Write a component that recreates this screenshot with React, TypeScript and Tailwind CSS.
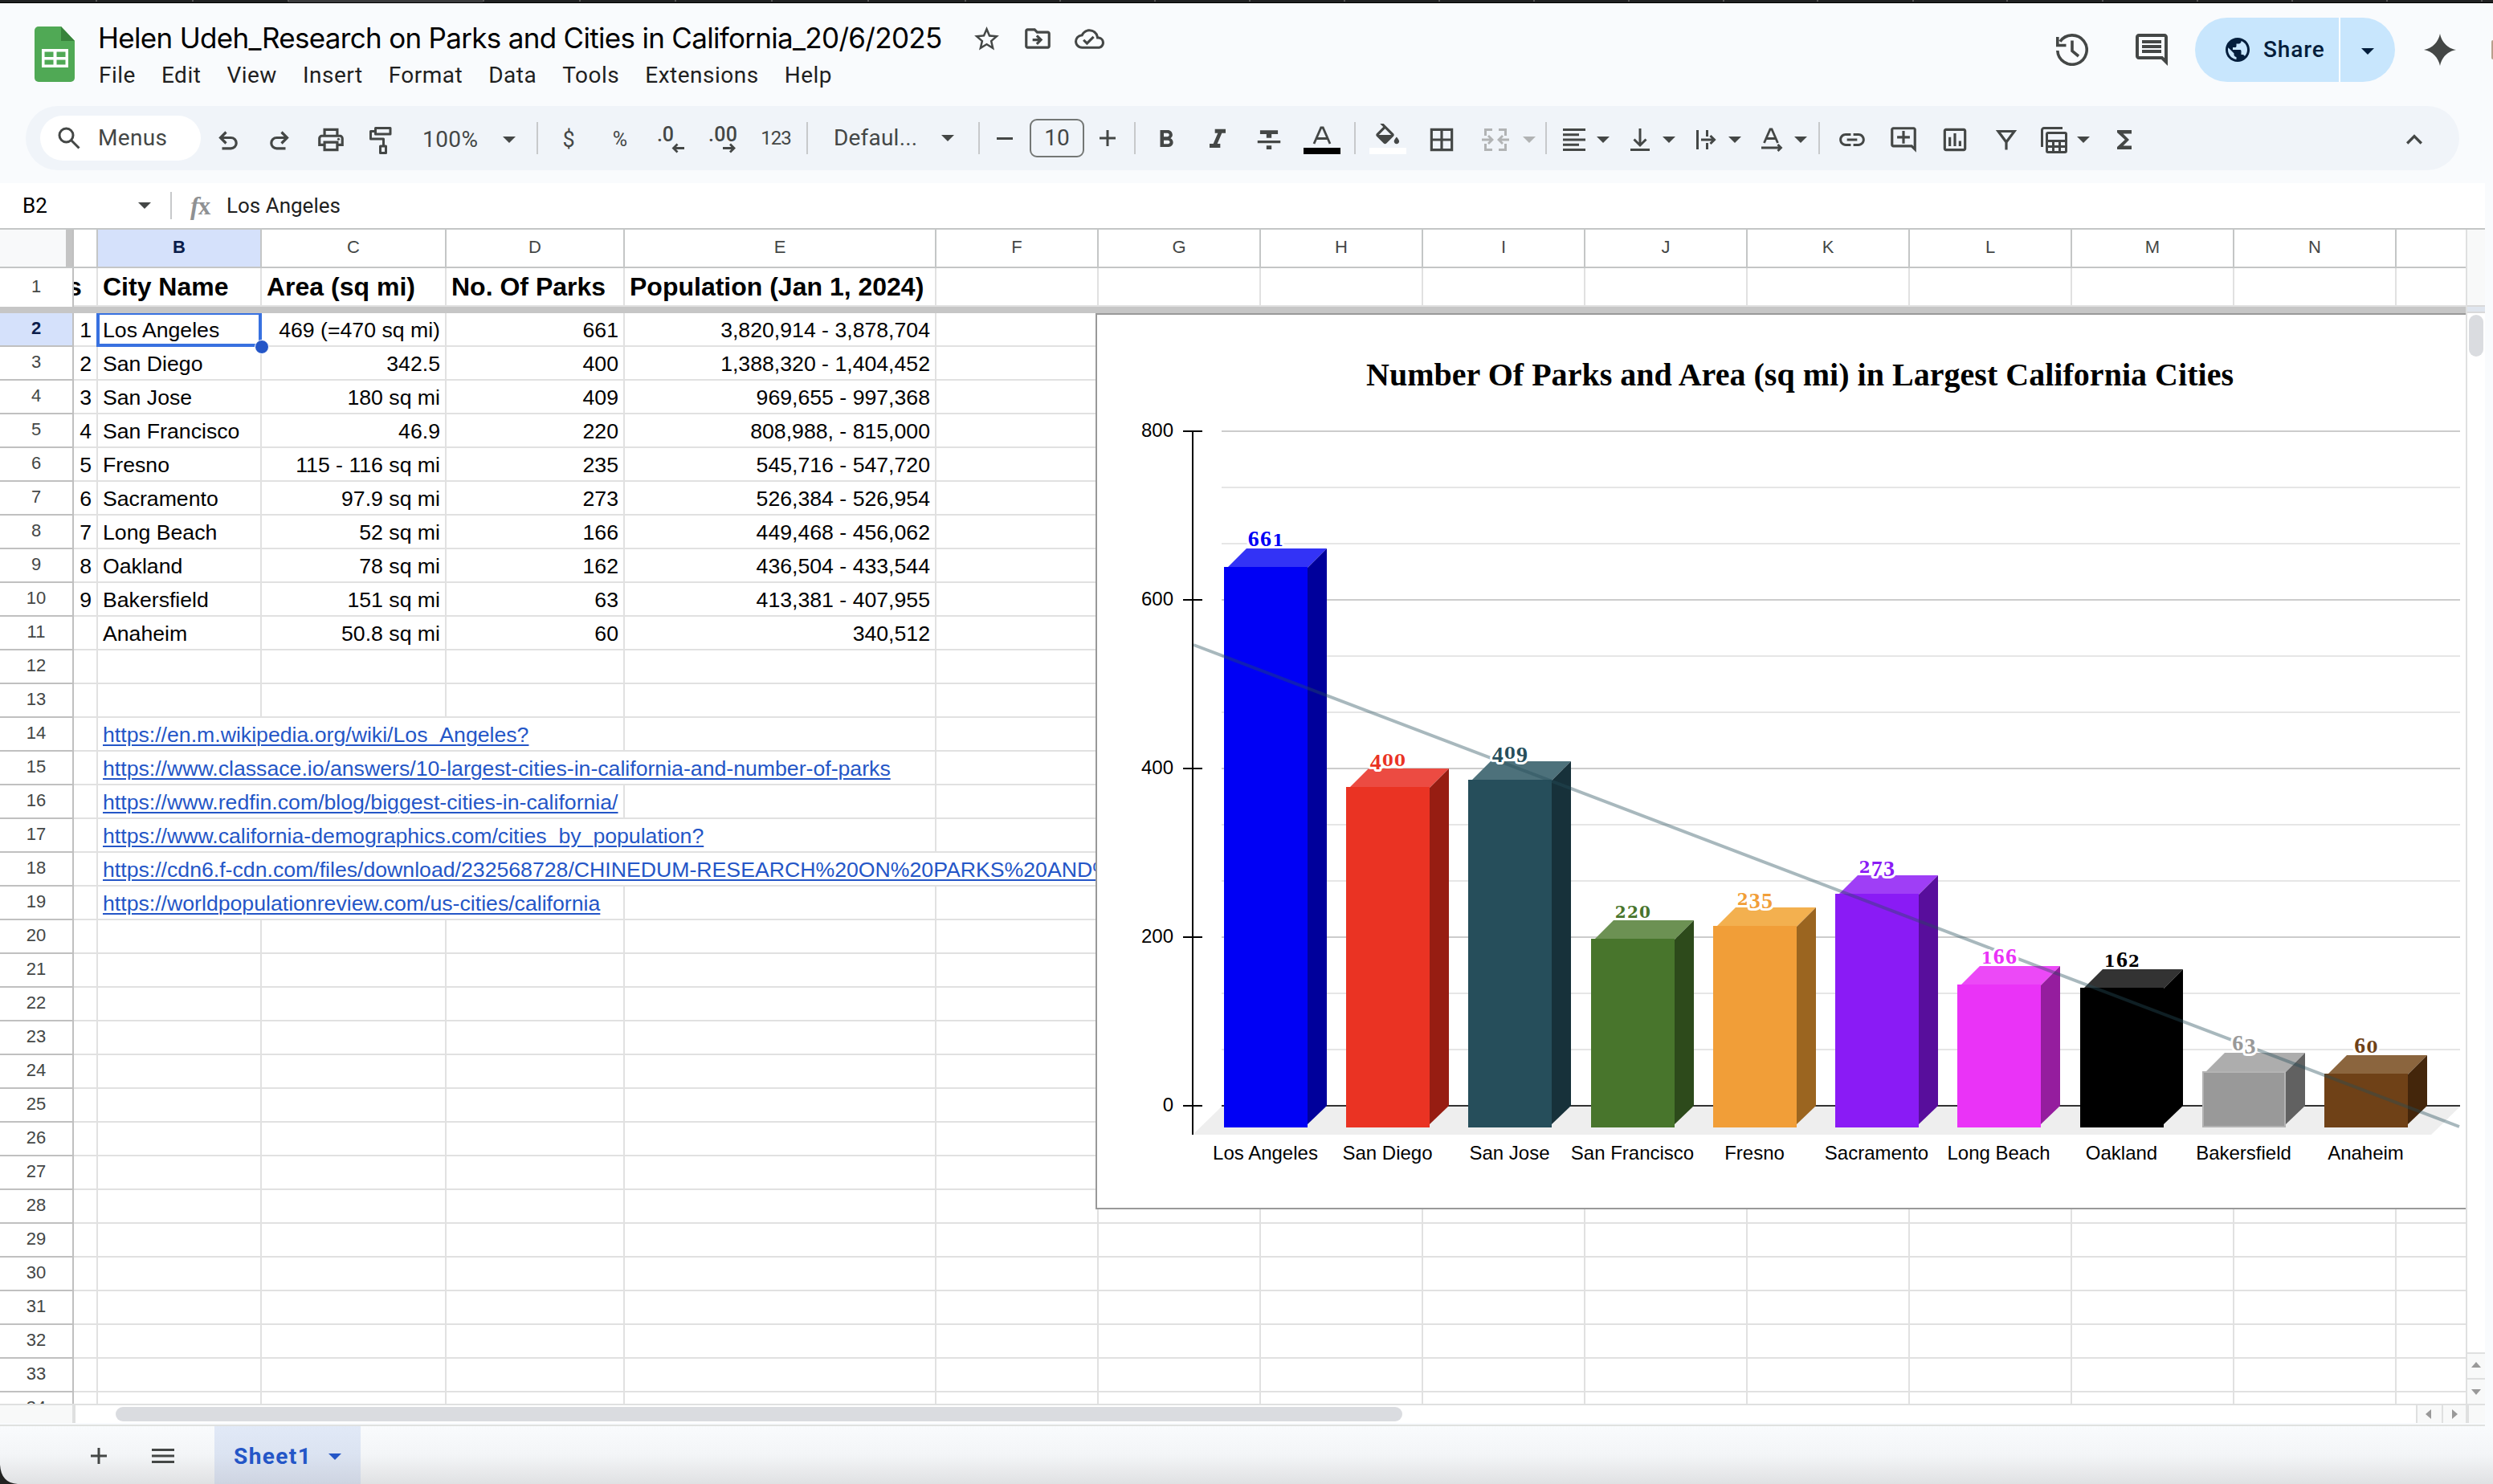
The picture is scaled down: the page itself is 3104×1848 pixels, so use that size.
// src/App.tsx
// Spreadsheet editor: title bar, toolbar, formula bar, frozen grid with an embedded 3D column chart

import type { ReactNode } from 'react';
import {
  MdBorderAll,
  MdFormatBold,
  MdFormatItalic,
  MdFormatStrikethrough,
  MdFunctions,
  MdKeyboardArrowUp,
  MdLink,
  MdOutlineAddComment,
  MdOutlineCloudDone,
  MdOutlineComment,
  MdOutlineDriveFileMove,
  MdOutlineInsertChart,
  MdOutlinePrint,
  MdPublic,
  MdStarOutline,
} from 'react-icons/md';

const MENUS = ['File', 'Edit', 'View', 'Insert', 'Format', 'Data', 'Tools', 'Extensions', 'Help'];

const TAB_MARKS = [119, 239, 358, 601, 721, 840, 960, 1080, 1201, 1319, 1437, 1555, 1673, 1791, 1909, 2027, 2145, 2262, 2381, 2498, 2617, 2735, 2853, 2971, 3089];

const COLUMNS = [
  { name: '', w: 'w-[30px]' },
  { name: 'B', w: 'w-[204px]' },
  { name: 'C', w: 'w-[230px]' },
  { name: 'D', w: 'w-[222px]' },
  { name: 'E', w: 'w-[388px]' },
  { name: 'F', w: 'w-[202px]' },
  { name: 'G', w: 'w-[202px]' },
  { name: 'H', w: 'w-[202px]' },
  { name: 'I', w: 'w-[202px]' },
  { name: 'J', w: 'w-[202px]' },
  { name: 'K', w: 'w-[202px]' },
  { name: 'L', w: 'w-[202px]' },
  { name: 'M', w: 'w-[202px]' },
  { name: 'N', w: 'w-[202px]' },
  { name: '', w: 'w-[86px]' },
];

const HEADINGS = ['', 'City Name', 'Area (sq mi)', 'No. Of Parks', 'Population (Jan 1, 2024)'];

const CITIES = [
  ['1', 'Los Angeles', '469 (=470 sq mi)', '661', '3,820,914 - 3,878,704'],
  ['2', 'San Diego', '342.5', '400', '1,388,320 - 1,404,452'],
  ['3', 'San Jose', '180 sq mi', '409', '969,655 - 997,368'],
  ['4', 'San Francisco', '46.9', '220', '808,988, - 815,000'],
  ['5', 'Fresno', '115 - 116 sq mi', '235', '545,716 - 547,720'],
  ['6', 'Sacramento', '97.9 sq mi', '273', '526,384 - 526,954'],
  ['7', 'Long Beach', '52 sq mi', '166', '449,468 - 456,062'],
  ['8', 'Oakland', '78 sq mi', '162', '436,504 - 433,544'],
  ['9', 'Bakersfield', '151 sq mi', '63', '413,381 - 407,955'],
  ['', 'Anaheim', '50.8 sq mi', '60', '340,512'],
];

// Links spill over the empty cells to their right, `last` is the index of the last column covered
const LINKS: Record<number, { url: string; last: number; w: string }> = {
  14: { url: 'https://en.m.wikipedia.org/wiki/Los_Angeles?', last: 3, w: 'w-[656px]' },
  15: { url: 'https://www.classace.io/answers/10-largest-cities-in-california-and-number-of-parks', last: 4, w: 'w-[1044px]' },
  16: { url: 'https://www.redfin.com/blog/biggest-cities-in-california/', last: 3, w: 'w-[656px]' },
  17: { url: 'https://www.california-demographics.com/cities_by_population?', last: 4, w: 'w-[1044px]' },
  18: { url: 'https://cdn6.f-cdn.com/files/download/232568728/CHINEDUM-RESEARCH%20ON%20PARKS%20AND%', last: 5, w: 'w-[1246px]' },
  19: { url: 'https://worldpopulationreview.com/us-cities/california', last: 3, w: 'w-[656px]' },
};

const BARS = [
  { city: 'Los Angeles', value: 661, front: '#0000f5', side: '#00009b', top: '#3333f6' },
  { city: 'San Diego', value: 400, front: '#ea3323', side: '#971d12', top: '#ec4b42' },
  { city: 'San Jose', value: 409, front: '#264e5b', side: '#17313a', top: '#4d717b' },
  { city: 'San Francisco', value: 220, front: '#48752c', side: '#2d4a1b', top: '#6c9153' },
  { city: 'Fresno', value: 235, front: '#f19e38', side: '#9b6520', top: '#f3b04f' },
  { city: 'Sacramento', value: 273, front: '#8a1bf5', side: '#580e9c', top: '#9f3ef6' },
  { city: 'Long Beach', value: 166, front: '#ea33f7', side: '#951d9e', top: '#ec49f7' },
  { city: 'Oakland', value: 162, front: '#000000', side: '#000000', top: '#333333' },
  { city: 'Bakersfield', value: 63, front: '#999999', side: '#616161', top: '#adadad', edge: '#b3b3b3' },
  { city: 'Anaheim', value: 60, front: '#6f4117', side: '#44260b', top: '#8b653e' },
];

function Caret({ className = '' }: { className?: string }) {
  return (
    <svg viewBox="0 0 16 8" className={`h-2 w-4 shrink-0 ${className}`}>
      <path d="M0 0h16L8 8z" fill="currentColor" />
    </svg>
  );
}

function Glyph({ children, stroke = 3 }: { children: ReactNode; stroke?: number }) {
  return (
    <svg viewBox="0 0 40 40" className="size-10 shrink-0" fill="none" stroke="currentColor" strokeWidth={stroke}>
      {children}
    </svg>
  );
}

function Tool({ children, className = 'w-16' }: { children: ReactNode; className?: string }) {
  return <div className={`flex h-10 shrink-0 items-center justify-center pt-1 ${className}`}>{children}</div>;
}

function DropTool({ children, className = '' }: { children: ReactNode; className?: string }) {
  return (
    <div className={`flex h-10 w-[82px] shrink-0 items-center gap-2 pt-1 ${className}`}>
      {children}
      <Caret />
    </div>
  );
}

function Divider({ className = '' }: { className?: string }) {
  return <div className={`h-10 w-0.5 shrink-0 bg-[#c7c9cb] ${className}`} />;
}

function TopStrip() {
  return (
    <div className="relative h-1 shrink-0 border-b border-black bg-[#202122]">
      <div className="absolute top-0 left-[359px] h-[3px] w-[242px] bg-[#3a3b3c]" />
      {TAB_MARKS.map((x) => (
        <div key={x} className="absolute top-0 h-[2px] w-0.5 bg-[#555]" style={{ left: x }} />
      ))}
    </div>
  );
}

function Header() {
  return (
    <header className="flex h-32 shrink-0 items-start justify-between overflow-hidden">
      <div className="flex pl-[43px]">
        <svg viewBox="0 0 50 69" className="mt-[29px] h-[69px] w-[50px]">
          <path d="M5 0h28l17 18v46a5 5 0 0 1-5 5H5a5 5 0 0 1-5-5V5a5 5 0 0 1 5-5z" fill="#50a955" />
          <path d="M33 0l17 18H33z" fill="#38833b" />
          <path d="M9 28h33v23H9zM12.500 31.500v6.500h11v-6.500zM27.500 31.500v6.500h11v-6.500zM12.500 41.500v6h11v-6zM27.500 41.500v6h11v-6z" fill="#fff" fillRule="evenodd" />
        </svg>
        <div className="pt-[23px] pl-[29px]">
          <div className="flex h-10 items-center text-[#444746]">
            <h1 className="w-[1078px] font-['Inter'] text-[35px] leading-10 tracking-[-0.69px] whitespace-nowrap text-black">
              Helen Udeh_Research on Parks and Cities in California_20/6/2025
            </h1>
            <MdStarOutline className="mt-0.5 ml-[10px] size-[37px]" />
            <MdOutlineDriveFileMove className="mt-0.5 ml-[26px] size-[38px]" />
            <MdOutlineCloudDone className="mt-0.5 ml-[27px] size-[37px]" />
          </div>
          <nav className="mt-[7px] flex h-10 gap-8 pl-[1px] text-[28px] leading-10 tracking-[0.5px] text-[#1f1f1f]">
            {MENUS.map((menu) => (
              <span key={menu}>{menu}</span>
            ))}
          </nav>
        </div>
      </div>

      <div className="flex h-[116px] items-center text-[#444746]">
        <svg viewBox="0 0 40 40" className="size-10" fill="none" stroke="currentColor" strokeWidth="3.600">
          <path d="M1.800 21A18.200 18.200 0 1 0 5 9.700M1.800 4v10.500H12.500M20 8.500v13l8 6.500" />
        </svg>
        <MdOutlineComment className="ml-[55px] size-12" />
        <div className="ml-[30px] flex h-20 items-center rounded-full bg-[#c8e6fd] text-[#041e3c]">
          <div className="flex h-20 w-[181px] items-center border-r-2 border-white pl-[35px]">
            <MdPublic className="size-9" />
            <span className="ml-[14px] text-[28px] font-medium tracking-[0.9px]">Share</span>
          </div>
          <div className="flex w-[68px] items-center pl-[26px]">
            <Caret className="mt-1" />
          </div>
        </div>
        <svg viewBox="0 0 40 40" className="ml-9 size-10">
          <path d="M20 0c2 10 9 18 20 20-11 2-18 10-20 20C18 30 11 22 0 20 11 18 18 10 20 0z" fill="currentColor" />
        </svg>
        <div className="ml-11 h-6 w-0.5 rounded-l-full bg-[#b8a08c]" />
      </div>
    </header>
  );
}

function Toolbar() {
  return (
    <div className="mr-[42px] ml-8 flex h-20 shrink-0 items-center rounded-full bg-[#f0f4f9] pl-[18px] text-[28px] text-[#444746]">
      <div className="flex h-14 w-[200px] shrink-0 items-center rounded-full bg-white pl-[22px]">
        <svg viewBox="0 0 28 28" className="size-7" fill="none" stroke="currentColor" strokeWidth="3">
          <circle cx="10.500" cy="10.500" r="8.500" />
          <path d="M17 17l9.500 9.500" />
        </svg>
        <span className="ml-[22px] tracking-[0.3px]">Menus</span>
      </div>

      <Tool className="ml-0.5 w-16">
        <Glyph stroke={3.2}>
          <path d="M17.500 10.500l-7 7 7 7M11 17.500h12.500a6.700 6.700 0 0 1 0 13.400H12.500" />
        </Glyph>
      </Tool>
      <Tool>
        <Glyph stroke={3.2}>
          <path d="M22.500 10.500l7 7-7 7M29 17.500H16.500a6.700 6.700 0 0 0 0 13.400H27.500" />
        </Glyph>
      </Tool>
      <Tool>
        <MdOutlinePrint className="size-[38px]" />
      </Tool>
      <Tool>
        <Glyph>
          <path d="M11.500 5.500h18.500v7.500H11.500zM11 9.500H5.500v9.500h16v8M17.500 28h7v8.500h-7z" strokeLinejoin="round" />
        </Glyph>
      </Tool>
      <div className="flex w-[160px] shrink-0 items-center pt-1 pl-[18px]">
        <span className="w-[100px] tracking-[0.4px]">100%</span>
        <Caret />
      </div>
      <Divider />

      <Tool className="ml-[6px] w-16 text-[27px]">$</Tool>
      <Tool className="w-16 text-[25px]">%</Tool>
      <Tool>
        <Glyph>
          <text x="2" y="22" fill="currentColor" stroke="none" fontSize="25" fontWeight="500" textLength="21">.0</text>
          <path d="M22 30.500h14M27.500 25.500l-5 5 5 5" strokeWidth="2.800" />
        </Glyph>
      </Tool>
      <Tool>
        <Glyph>
          <text x="2" y="22" fill="currentColor" stroke="none" fontSize="25" fontWeight="500" textLength="36">.00</text>
          <path d="M20 30.500h14M29 25.500l5 5-5 5" strokeWidth="2.800" />
        </Glyph>
      </Tool>
      <Tool className="w-[68px] text-[24px]">
        <span className="-mt-1 tracking-[-1px]">123</span>
      </Tool>
      <Divider className="ml-1" />

      <div className="flex w-[212px] shrink-0 items-center pl-8">
        <span className="w-[134px] tracking-[0.2px]">Defaul...</span>
        <Caret />
      </div>
      <Divider />
      <div className="flex w-[192px] shrink-0 items-center">
        <div className="ml-[21px] h-[3px] w-5 bg-current" />
        <div className="ml-[21px] flex h-12 w-[68px] items-center justify-center rounded-[9px] border-2 border-[#747775]">10</div>
        <svg viewBox="0 0 20 20" className="ml-[19px] size-5" fill="none" stroke="currentColor" strokeWidth="3">
          <path d="M10 0v20M0 10h20" />
        </svg>
      </div>
      <Divider />

      <Tool className="ml-[6px] w-16">
        <MdFormatBold className="size-9" />
      </Tool>
      <Tool>
        <MdFormatItalic className="size-10" />
      </Tool>
      <Tool>
        <MdFormatStrikethrough className="mt-0.5 size-[38px]" />
      </Tool>
      <Tool className="w-[68px]">
        <svg viewBox="0 0 46 40" className="h-10 w-[46px] shrink-0">
          <path d="M13 25L21.800 5h2.400L33 25M16.500 18.500h13" fill="none" stroke="currentColor" strokeWidth="2.800" />
          <path d="M0 30h46v8H0z" fill="#000" />
        </svg>
      </Tool>
      <Divider className="ml-[6px]" />
      <Tool className="ml-2 w-16">
        <svg viewBox="0 0 46 40" className="h-10 w-[46px] shrink-0">
          <path
            d="M16.560 8.940L7.620 0 6.210 1.410l2.380 2.380-5.150 5.150c-.59.59-.59 1.540 0 2.120l5.500 5.500c.29.29.68.44 1.060.44s.77-.15 1.060-.44l5.500-5.500c.59-.58.59-1.530 0-2.120zM5.210 10L10 5.210 14.790 10H5.210zM19 11.500s-2 2.170-2 3.500c0 1.100.9 2 2 2s2-.9 2-2c0-1.330-2-3.500-2-3.500z"
            fill="currentColor"
            transform="translate(3.500 -2) scale(1.600)"
          />
          <path d="M0 30h46v8H0z" fill="#fff" />
        </svg>
      </Tool>
      <Tool className="ml-[3px] w-16">
        <MdBorderAll className="size-[38px]" />
      </Tool>
      <DropTool className="ml-[15px] !gap-[14px] text-[#b1b3b4]">
        <Glyph>
          <path d="M16 7.500H7.500V15M24 7.500h8.500V15M16 32.500H7.500V25M24 32.500h8.500V25" />
          <path d="M3 20h12M11 15l5 5-5 5M37 20H25M29 15l-5 5 5 5" strokeWidth="2.800" />
        </Glyph>
      </DropTool>
      <Divider />

      <DropTool className="ml-[14px]">
        <Glyph>
          <path d="M6 7.500h28M6 13.750h20M6 20h28M6 26.250h20M6 32.500h28" />
        </Glyph>
      </DropTool>
      <DropTool>
        <Glyph>
          <path d="M20 6v20M12.500 19.500l7.500 7.500 7.500-7.500M8 32.500h24" />
        </Glyph>
      </DropTool>
      <DropTool>
        <Glyph>
          <path d="M9.500 8v24M21.500 8v8M21.500 24v8M14 20h16M25.500 15l5 5-5 5" />
        </Glyph>
      </DropTool>
      <DropTool>
        <Glyph stroke={2.8}>
          <path d="M10.500 24L18 7h2l7.500 17M13.500 18.500h11M7 30h24M27.500 26l4 4-4 4" />
        </Glyph>
      </DropTool>
      <Divider className="-ml-1" />

      <Tool className="ml-2 w-16">
        <MdLink className="size-[38px]" />
      </Tool>
      <Tool>
        <MdOutlineAddComment className="size-[38px]" />
      </Tool>
      <Tool>
        <MdOutlineInsertChart className="size-[38px]" />
      </Tool>
      <Tool>
        <Glyph>
          <path d="M10 9.500h20L20 23zM20 20v12.500" strokeWidth="3.200" />
        </Glyph>
      </Tool>
      <DropTool className="ml-2">
        <Glyph>
          <path d="M4.500 29V8a2.500 2.500 0 0 1 2.500-2.500h23" />
          <path d="M12 11.500h21a1.500 1.500 0 0 1 1.500 1.500v21a1.500 1.500 0 0 1-1.500 1.500H12a1.500 1.500 0 0 1-1.500-1.500V13a1.500 1.500 0 0 1 1.500-1.500zM10 21.500h25M10 28.500h25M18.500 21v14M26.500 21v14" />
        </Glyph>
      </DropTool>
      <Tool className="-ml-[7px] w-16">
        <MdFunctions className="size-9" />
      </Tool>
      <MdKeyboardArrowUp className="mt-1 mr-9 ml-auto size-10" />
    </div>
  );
}

function FormulaBar() {
  return (
    <div className="flex h-14 shrink-0 items-center text-[26px] leading-none">
      <span className="w-[172px] pl-7 text-black">B2</span>
      <Caret className="text-[#444746]" />
      <div className="ml-6 h-[34px] w-0.5 bg-[#c7c9cb]" />
      <span className="ml-[23px] w-[45px] font-['Liberation_Serif'] text-[32px] text-[#8f9193]">
        <i className="font-bold">f</i>
        <span className="-ml-[1px] text-[31px] font-bold">x</span>
      </span>
      <span className="text-[#1f1f1f]">Los Angeles</span>
    </div>
  );
}

function ColumnHeaders() {
  return (
    <div className="flex h-[50px] shrink-0 border-y-2 border-[#c4c6c6] text-[22px] text-[#444746]">
      <div className="w-[92px] shrink-0 border-r-2 border-[#c0c0c0] bg-[#f8f9fa]">
        <div className="ml-auto h-full w-2 bg-[#c4c4c4]" />
      </div>
      {COLUMNS.map(({ name, w }, i) => (
        <div
          key={i}
          className={`flex shrink-0 items-center justify-center border-r-2 border-[#c4c6c6] pb-[3px] last:border-r-0 ${w} ${
            name === 'B' ? 'bg-[#d5e1fb] font-bold text-[#0b1d4b]' : ''
          }`}
        >
          {name}
        </div>
      ))}
    </div>
  );
}

function HeadingRow() {
  return (
    <div className="flex h-12 shrink-0">
      <div className="flex w-[92px] shrink-0 items-center justify-center border-r-2 border-[#c0c0c0] pb-[3px] text-[22px] text-[#444746]">1</div>
      {COLUMNS.map(({ w }, i) => (
        <div
          key={i}
          className={`flex shrink-0 items-center border-r-2 border-b-2 border-[#e1e1e1] pl-[6px] text-[32px] font-bold whitespace-nowrap text-black last:border-r-0 ${w}`}
        >
          {i === 0 ? <span className="-ml-[14px] [clip-path:inset(0_0_0_8px)]">s</span> : HEADINGS[i]}
        </div>
      ))}
    </div>
  );
}

function Row({ number }: { number: number }) {
  const cells = CITIES[number - 2] ?? [];
  const link = LINKS[number];
  return (
    <div className="flex h-[42px] shrink-0">
      <div
        className={`flex w-[92px] shrink-0 items-center justify-center border-r-2 border-b-2 border-[#c0c0c0] pb-[3px] text-[22px] ${
          number === 2 ? 'bg-[#d5e1fb] font-bold text-[#0b1d4b]' : 'text-[#444746]'
        }`}
      >
        {number}
      </div>
      {COLUMNS.map(({ w }, i) => {
        if (link && i > 1 && i <= link.last) return null;
        const spill = link && i === 1;
        return (
          <div
            key={i}
            className={`flex shrink-0 items-center overflow-hidden border-r-2 border-b-2 border-[#e1e1e1] px-[6px] pt-px text-[26.67px] leading-[38px] whitespace-nowrap text-black last:border-r-0 ${
              spill ? link.w : w
            } ${i === 1 ? '' : 'justify-end'}`}
          >
            {spill ? <a className="text-[#2456c7] underline decoration-2 underline-offset-[3px]">{link.url}</a> : cells[i]}
          </div>
        );
      })}
    </div>
  );
}

// Old-style figures: 0-2 sit at x-height, 6 and 8 rise above it, the rest hang below the baseline
function FigureLabel({ value, x, y, fill }: { value: number; x: number; y: number; fill: string }) {
  let shift = 0;
  return (
    <text x={x} y={y} fill={fill} textAnchor="middle" fontWeight="700" stroke="#fff" strokeWidth="6" strokeLinejoin="round" paintOrder="stroke">
      {String(value).split('').map((digit, i) => {
        const small = '012'.includes(digit);
        const drop = '34579'.includes(digit) ? 4 : 0;
        const dy = drop - shift;
        shift = drop;
        return (
          <tspan key={i} dy={dy} fontSize={small ? 20 : 28} fontFamily={small ? 'DejaVu Serif' : 'Liberation Serif'} letterSpacing="1.2">
            {digit}
          </tspan>
        );
      })}
    </text>
  );
}

// Chart canvas shares its origin with the card: plot floor at y=987, 1.05px per unit
function Chart() {
  const zero = 987;
  const barX = (i: number) => Math.floor(160.4 + i * 152.25);
  return (
    <div className="absolute top-0 left-[1364px] h-[1116px] w-[1706px] border-y-2 border-l-2 border-[#999] bg-white">
      <svg viewBox="2 2 1704 1112" className="h-[1112px] w-[1704px] font-['Liberation_Sans']">
        <text x="877" y="90" textAnchor="middle" textLength="1080" className="font-['Liberation_Serif']" fontSize="40" fontWeight="700">
          Number Of Parks and Area (sq mi) in Largest California Cities
        </text>
        <path d="M121 1023l36-35h1542l-36 35z" fill="#eee" />
        {Array.from({ length: 12 }, (_, i) => (
          <path key={i} d={`M157 ${147 + i * 70}h1542`} stroke={i % 3 === 0 ? '#ccc' : '#e6e6e6'} strokeWidth="2" />
        ))}
        <path d="M157 987h1542" stroke="#333" strokeWidth="2" />
        <path d="M121 146v877M109 147h24M109 357h24M109 567h24M109 777h24M109 987h24" stroke="#000" strokeWidth="2" />
        {[800, 600, 400, 200, 0].map((tick) => (
          <text key={tick} x="97" y={zero - tick * 1.05 + 7} textAnchor="end" fontSize="24">
            {tick}
          </text>
        ))}

        {BARS.map(({ city, value, front, side, top, edge }, i) => {
          const x = barX(i);
          const back = Math.round(zero - value * 1.05);
          return (
            <g key={city}>
              <path d={`M${x + 4} ${back + 24}l24-24h100l-24 24z`} fill={top} />
              <path d={`M${x + 104} ${back + 24}l24-24V${zero}l-24 23z`} fill={side} />
              <rect x={x} y={back + 23} width="104" height={1014 - back - 23} fill={edge ?? front} />
              {edge && <rect x={x + 2} y={back + 25} width="100" height={1012 - back - 25} fill={front} />}
              <text x={x + 51.5} y="1054" textAnchor="middle" fontSize="24">
                {city}
              </text>
            </g>
          );
        })}

        <path d="M122 413L1698 1013" stroke="#264e5b" strokeOpacity="0.4" strokeWidth="4" />
        {BARS.map(({ city, value, front }, i) => (
          <FigureLabel key={city} value={value} x={barX(i) + 52.5} y={zero - value * 1.05 - 3} fill={front} />
        ))}
      </svg>
    </div>
  );
}

function Grid() {
  return (
    <div className="flex w-[3070px] shrink-0 flex-col font-['Liberation_Sans']">
      <ColumnHeaders />
      <HeadingRow />
      <div className="h-2 shrink-0 bg-[#c6c6c6]" />
      <div className="relative h-[1358px] shrink-0 overflow-hidden">
        {Array.from({ length: 33 }, (_, i) => (
          <Row key={i} number={i + 2} />
        ))}
        <div className="absolute -top-0.5 left-[120px] h-11 w-[206px] border-4 border-[#3871e0]" />
        <div className="absolute top-[33px] left-[317px] size-[18px] rounded-full border border-white bg-[#2456c7]" />
        <Chart />
      </div>
    </div>
  );
}

function VerticalScroll() {
  return (
    <div className="flex w-6 shrink-0 flex-col border-l-2 border-[#dfe0e0]">
      <div className="-ml-0.5 h-0.5 shrink-0 bg-[#c4c6c6]" />
      <div className="h-[94px] shrink-0 bg-[#f8f9f9]" />
      <div className="h-[10px] shrink-0 border-y-2 border-[#d9d9d9] bg-[#dfe5ee]" />
      <div className="mx-0.5 mt-0.5 h-[52px] shrink-0 rounded-full bg-[#dadce0]" />
      <div className="mt-auto flex h-8 shrink-0 items-center justify-center border-t-2 border-[#dfe0e0] bg-[#f8f9f9] pb-1 text-[#999]">
        <svg viewBox="0 0 12 7" className="h-[7px] w-3"><path d="M6 0l6 7H0z" fill="currentColor" /></svg>
      </div>
      <div className="flex h-8 shrink-0 items-center justify-center border-t-2 border-[#dfe0e0] bg-[#f8f9f9] text-[#999]">
        <svg viewBox="0 0 12 7" className="h-[7px] w-3"><path d="M0 0h12L6 7z" fill="currentColor" /></svg>
      </div>
    </div>
  );
}

function HorizontalScroll() {
  return (
    <div className="flex h-6 w-[3094px] shrink-0 border-t-2 border-[#dfe0e0] bg-white text-[#999]">
      <div className="w-[94px] border-r-4 border-[#dfe0e0] bg-[#f8f9f9]" />
      <div className="mt-0.5 ml-[50px] h-[18px] w-[1602px] rounded-full bg-[#dadce0]" />
      <div className="ml-auto flex w-8 items-center justify-center border-l-2 border-[#dfe0e0] bg-[#f8f9f9] pr-1">
        <svg viewBox="0 0 7 12" className="h-3 w-[7px]"><path d="M7 0v12L0 6z" fill="currentColor" /></svg>
      </div>
      <div className="flex w-[30px] items-center justify-center border-l-2 border-[#dfe0e0] bg-[#f8f9f9]">
        <svg viewBox="0 0 7 12" className="h-3 w-[7px]"><path d="M0 0v12l7-6z" fill="currentColor" /></svg>
      </div>
      <div className="w-6 border-l-4 border-[#dfe0e0] bg-[#f8f9f9]" />
    </div>
  );
}

function SheetTabs() {
  return (
    <footer className="flex h-[72px] shrink-0 items-center bg-linear-to-b from-[#f9fbfd] via-[#f3f5f7] to-[#e0e1e3] text-[#444746]">
      <svg viewBox="0 0 20 20" className="mt-0.5 ml-[113px] size-5" fill="none" stroke="currentColor" strokeWidth="3">
        <path d="M10 0v20M0 10h20" />
      </svg>
      <svg viewBox="0 0 28 20" className="mt-0.5 ml-14 h-5 w-7" fill="none" stroke="currentColor" strokeWidth="3">
        <path d="M0 2.500h28M0 10h28M0 17.500h28" />
      </svg>
      <div className="ml-[50px] flex h-[72px] w-[182px] items-center bg-linear-to-b from-[#e1e9f7] via-[#dbe3f1] to-[#ced4e1] pt-1 pl-6 text-[#2456c7]">
        <span className="w-[118px] text-[28px] font-bold tracking-[1.4px]">Sheet1</span>
        <Caret />
      </div>
    </footer>
  );
}

export default function App() {
  return (
    <div className="relative flex h-[1848px] w-[3104px] flex-col overflow-hidden bg-[#f9fbfd] font-['Roboto',sans-serif]">
      <TopStrip />
      <Header />
      <Toolbar />
      <div className="mt-4 w-[3094px] shrink-0 bg-white">
        <FormulaBar />
        <div className="flex">
          <Grid />
          <VerticalScroll />
        </div>
        <HorizontalScroll />
      </div>
      <div className="h-1 w-[3094px] shrink-0 border-b-2 border-[#dfe1e0]" />
      <SheetTabs />
      {/* Rounded window corner */}
      <svg viewBox="0 0 22 24" className="absolute bottom-0 left-0 h-6 w-[22px]">
        <path d="M0 0c1 15 8 23 22 24H0z" fill="#222322" />
      </svg>
    </div>
  );
}
